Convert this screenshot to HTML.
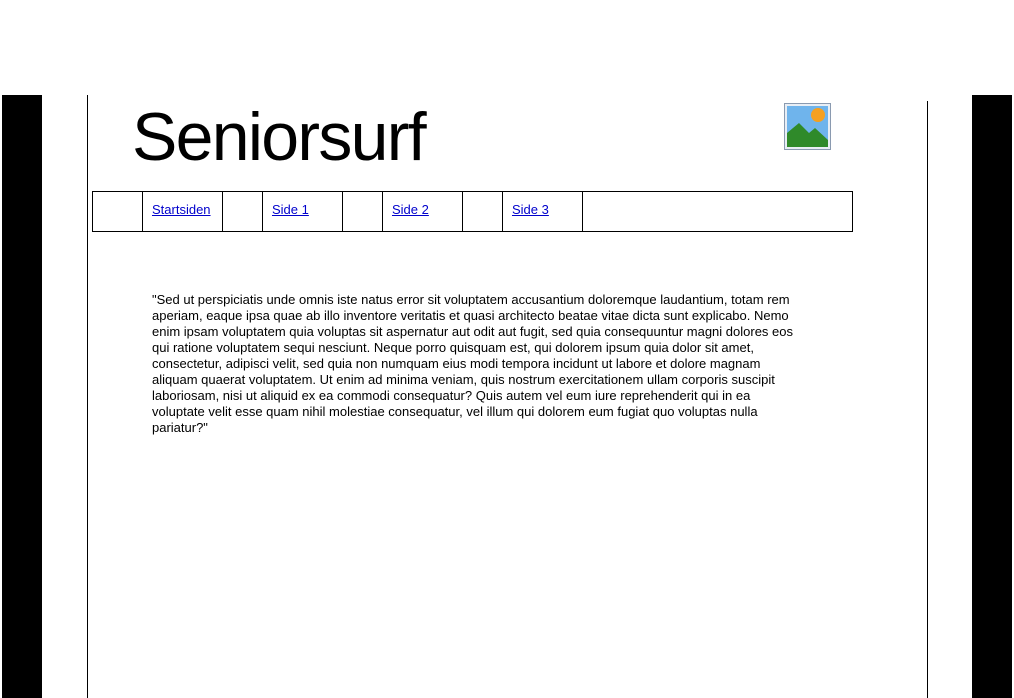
<!DOCTYPE html>
<html><head><style>
body{margin:0;width:1014px;height:698px;position:relative;overflow:hidden;background:#fff;font-family:"Liberation Sans",Arial,sans-serif;}
.bar{position:absolute;background:#000;top:95px;height:603px;width:40px}
.vl{position:absolute;width:1px;background:#000;bottom:0}
h1{position:absolute;left:132px;top:92px;margin:0;font-weight:normal;font-size:68px;line-height:90px;letter-spacing:-1.7px}
table{position:absolute;left:92px;top:191px;border-collapse:collapse;height:41px}
td{border:1px solid #000;padding:0 0 4px 9px;font-size:13px;vertical-align:middle}
a{color:#00c;}
p{position:absolute;left:152px;top:292px;width:650px;margin:0;font-size:13px;line-height:16px}
</style></head><body>
<div class="bar" style="left:2px"></div>
<div class="bar" style="left:972px"></div>
<div class="vl" style="left:87px;top:95px"></div>
<div class="vl" style="left:927px;top:101px"></div>
<h1>Seniorsurf</h1>
<svg style="position:absolute;left:784px;top:103px" width="47" height="47" viewBox="0 0 47 47">
<rect x="0.5" y="0.5" width="46" height="46" fill="#e8eef5" stroke="#8a9ab0"/>
<rect x="3" y="3" width="41" height="41" fill="#6fb4ec"/>
<circle cx="34" cy="12" r="7" fill="#f5a020"/>
<path d="M3 44 L3 30 L15 20 L25 30 L31 25 L44 37 L44 44Z" fill="#2f8a2a"/>
</svg>
<table><tr>
<td style="width:40px"></td><td style="width:70px"><a href="#">Startsiden</a></td>
<td style="width:30px"></td><td style="width:70px"><a href="#">Side 1</a></td>
<td style="width:30px"></td><td style="width:70px"><a href="#">Side 2</a></td>
<td style="width:30px"></td><td style="width:70px"><a href="#">Side 3</a></td>
<td style="width:260px"></td></tr></table>
<p>"Sed ut perspiciatis unde omnis iste natus error sit voluptatem accusantium doloremque laudantium, totam rem aperiam, eaque ipsa quae ab illo inventore veritatis et quasi architecto beatae vitae dicta sunt explicabo. Nemo enim ipsam voluptatem quia voluptas sit aspernatur aut odit aut fugit, sed quia consequuntur magni dolores eos qui ratione voluptatem sequi nesciunt. Neque porro quisquam est, qui dolorem ipsum quia dolor sit amet, consectetur, adipisci velit, sed quia non numquam eius modi tempora incidunt ut labore et dolore magnam aliquam quaerat voluptatem. Ut enim ad minima veniam, quis nostrum exercitationem ullam corporis suscipit laboriosam, nisi ut aliquid ex ea commodi consequatur? Quis autem vel eum iure reprehenderit qui in ea voluptate velit esse quam nihil molestiae consequatur, vel illum qui dolorem eum fugiat quo voluptas nulla pariatur?"</p>
</body></html>
